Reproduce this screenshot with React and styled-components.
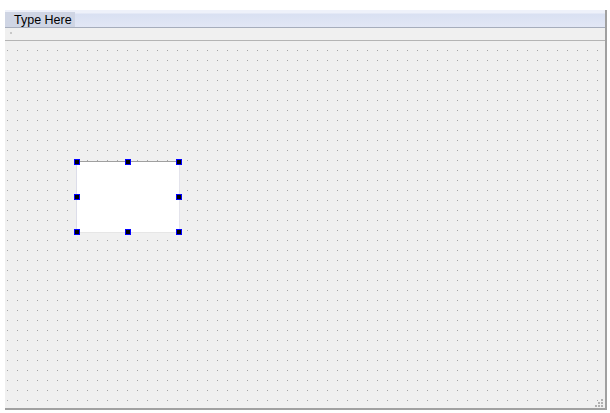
import React from 'react';
import styled, { createGlobalStyle } from 'styled-components';

const GlobalStyle = createGlobalStyle`
  html, body {
    margin: 0;
    padding: 0;
    background: #ffffff;
  }
  body {
    font-family: "Liberation Sans", Arial, sans-serif;
  }
`;

const FormWindow = styled.div`
  margin: 10px 0 0 5px;
  width: 602px;
  height: 400px;
  display: flex;
  flex-direction: column;
  background: #f0f0f0;
  border-right: 2px solid #a0a0a0;
  border-bottom: 2px solid #a0a0a0;
  box-sizing: border-box;
`;

const MenuBar = styled.div`
  height: 18px;
  box-sizing: border-box;
  display: flex;
  align-items: stretch;
  padding-top: 2px;
  background: linear-gradient(#eef1fa 0, #eef1fa 3px, #d9e0f2 4px, #e2e7f5 100%);
  border-bottom: 1px solid #a6adbc;
`;

const MenuItem = styled.div`
  display: flex;
  align-items: center;
  width: 70px;
  box-sizing: border-box;
  padding-left: 9px;
  white-space: nowrap;
  font-size: 12.5px;
  color: #000000;
  background: #cfd5e4;
`;

const ToolArea = styled.div`
  height: 13px;
  box-sizing: border-box;
  position: relative;
  border-bottom: 1px solid #b4b4b4;
`;

const Handle = styled.span`
  position: absolute;
  left: 5px;
  top: 4px;
  width: 2px;
  height: 2px;
  background: #c8c8c8;
`;

const Canvas = styled.div`
  flex: 1;
  position: relative;
  background-color: #f0f0f0;
  background-image: conic-gradient(at 1px 1px, transparent 75%, #a4a4a4 0);
  background-size: 10px 10px;
  background-position: 2px 9px;
`;

const Widget = styled.div`
  position: absolute;
  left: ${p => p.x}px;
  top: ${p => p.y}px;
  width: ${p => p.w}px;
  height: ${p => p.h}px;
  background: #ffffff;
  border-top: 1px solid #a0a0a0;
  border-left: 1px solid #dcdde9;
  border-right: 1px solid #e4e4ec;
  border-bottom: 1px solid #e6e6e6;
  box-sizing: border-box;
`;

const SelectionHandle = styled.span`
  position: absolute;
  left: ${p => p.x}%;
  top: ${p => p.y}%;
  width: 4px;
  height: 4px;
  margin: -3px 0 0 -3px;
  background: #000000;
  border: 1px solid #0000ff;
`;

const Grip = styled.svg`
  position: absolute;
  right: 2px;
  bottom: 1px;
`;

const handles = [
  [0, 0], [50, 0], [100, 0],
  [0, 50], [100, 50],
  [0, 100], [50, 100], [100, 100],
];

const App = () => (
  <>
    <GlobalStyle />
    <FormWindow>
      <MenuBar>
        <MenuItem>Type Here</MenuItem>
      </MenuBar>
      <ToolArea>
        <Handle />
      </ToolArea>
      <Canvas>
        <Widget x={71} y={120} w={104} h={72}>
          {handles.map(([x, y]) => <SelectionHandle key={`${x}-${y}`} x={x} y={y} />)}
        </Widget>
        <Grip width="10" height="10" viewBox="0 0 10 10">
          <g fill="#b0b0b0">
            <rect x="8" y="2" width="2" height="2" />
            <rect x="5" y="5" width="2" height="2" />
            <rect x="8" y="5" width="2" height="2" />
            <rect x="2" y="8" width="2" height="2" />
            <rect x="5" y="8" width="2" height="2" />
            <rect x="8" y="8" width="2" height="2" />
          </g>
        </Grip>
      </Canvas>
    </FormWindow>
  </>
);

export default App;
